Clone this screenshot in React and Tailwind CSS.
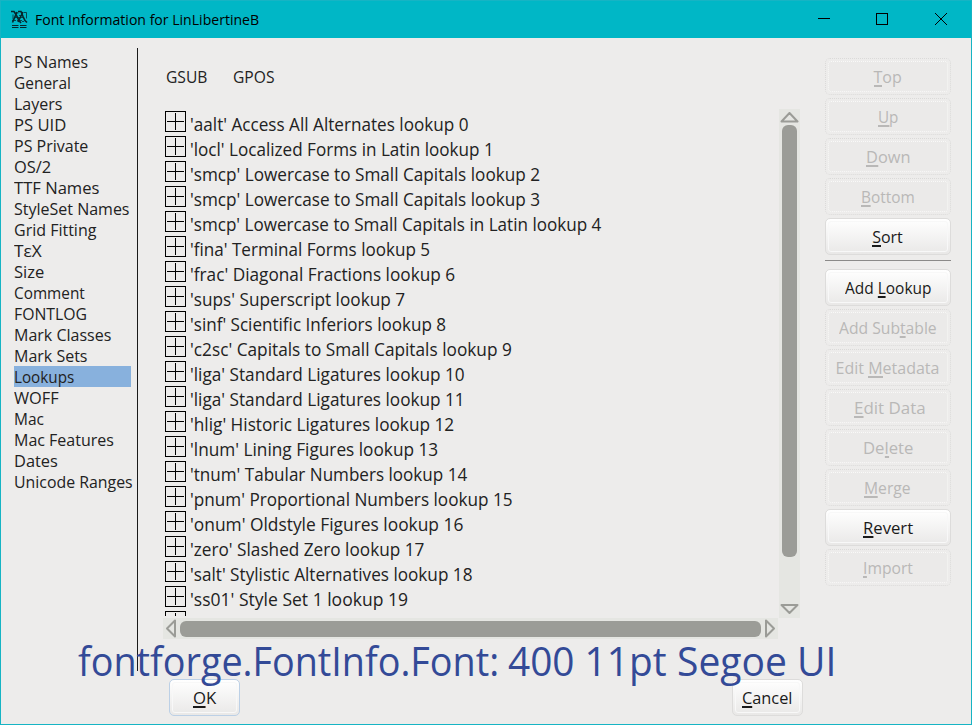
const SECTIONS = [
  ['PS Names', 74], ['General', 57], ['Layers', 48], ['PS UID', 52], ['PS Private', 74], ['OS/2', 37],
  ['TTF Names', 85], ['StyleSet Names', 116], ['Grid Fitting', 82], ['TεX', 28], ['Size', 30], ['Comment', 71],
  ['FONTLOG', 73], ['Mark Classes', 97], ['Mark Sets', 73], ['Lookups', 60], ['WOFF', 45], ['Mac', 30],
  ['Mac Features', 100], ['Dates', 44], ['Unicode Ranges', 119],
];

const LOOKUPS = [
  ["'aalt' Access All Alternates lookup 0", 279],
  ["'locl' Localized Forms in Latin lookup 1", 304],
  ["'smcp' Lowercase to Small Capitals lookup 2", 350],
  ["'smcp' Lowercase to Small Capitals lookup 3", 350],
  ["'smcp' Lowercase to Small Capitals in Latin lookup 4", 411],
  ["'fina' Terminal Forms lookup 5", 240],
  ["'frac' Diagonal Fractions lookup 6", 265],
  ["'sups' Superscript lookup 7", 215],
  ["'sinf' Scientific Inferiors lookup 8", 256],
  ["'c2sc' Capitals to Small Capitals lookup 9", 322],
  ["'liga' Standard Ligatures lookup 10", 275],
  ["'liga' Standard Ligatures lookup 11", 275],
  ["'hlig' Historic Ligatures lookup 12", 264],
  ["'lnum' Lining Figures lookup 13", 248],
  ["'tnum' Tabular Numbers lookup 14", 277],
  ["'pnum' Proportional Numbers lookup 15", 323],
  ["'onum' Oldstyle Figures lookup 16", 273],
  ["'zero' Slashed Zero lookup 17", 234],
  ["'salt' Stylistic Alternatives lookup 18", 282],
  ["'ss01' Style Set 1 lookup 19", 218],
];

/* Sets a run of text condensed so that it takes the given advance width. */
function Run({ width, children }) {
  const fit = (el) => {
    if (!el) return;
    el.style.transform = `scaleX(${width / el.offsetWidth})`;
  };
  return (
    <span className="inline-block whitespace-nowrap" style={{ width }}>
      <span ref={fit} className="inline-block origin-left">{children}</span>
    </span>
  );
}

/* The letter after "&" is the button's mnemonic. */
function Label({ text, disabled }) {
  const i = text.indexOf('&');
  return (
    <>
      {text.slice(0, i)}
      <span className={`inline-block h-[19px] border-b-2 leading-[19px] ${disabled ? 'border-[#b9b8b7]' : 'border-[#1a1a1a]'}`}>{text[i + 1]}</span>
      {text.slice(i + 2)}
    </>
  );
}

function Button({ text, width, disabled, ring, small }) {
  const size = small ? 'w-[71px]' : 'w-[126px]';
  const look = disabled
    ? 'border-dotted border-[#dbdad9] text-[#b9b8b7]'
    : `${ring ? 'border-[#bcd0e6]' : 'border-[#dddcdb]'} bg-linear-to-b from-white to-[#e9e8e7] text-[#1a1a1a]`;
  const inner = disabled ? 'border-dotted border-[#f9f9f8] bg-[#ebeae9]' : 'border-[#f8f8f8]';
  return (
    <button className={`flex h-[37px] shrink-0 rounded-[5px] border p-[2px] text-[16px] leading-[21px] ${size} ${look}`}>
      <span className={`flex h-full w-full items-center justify-center rounded-[3px] border pt-px pr-px ${inner}`}>
        <Run width={width}><Label text={text} disabled={disabled} /></Run>
      </span>
    </button>
  );
}

function Arrow({ points, w, h }) {
  return (
    <svg width={w} height={h} className="shrink-0" fill="none" stroke="#9b9c97" strokeWidth="2" strokeLinejoin="round">
      <polygon points={points} />
    </svg>
  );
}

function Expander() {
  return (
    <svg width="21" height="21" className="shrink-0" fill="none" stroke="#000" shapeRendering="crispEdges">
      <path d="M.5.5h20v20H.5zM10.5 2v17M2 10.5h17" />
    </svg>
  );
}

function AppIcon() {
  return (
    <svg width="17" height="19" viewBox="0 0 17 19" fill="none" stroke="#06262b">
      <path d="M0 1.5h3l2 3 3 6 2 2.500M7 1.500h3l2 5 2 4 2 2M6 2L3 9 1.500 12.500M12 2L9 8l-2 4" strokeWidth="1.6" />
      <path d="M2 4.500v5M1 10.500h4M5.500 3h2M8 5.500h2M13 2.500h2.500v6M11 11.500h2M4 7.500h9M6 10.500h5" strokeWidth="1" opacity=".75" />
      <path d="M1 15.500h6.500M9 15.500h6.500M1 17.500h6.500M9 17.500h6.500" strokeWidth="1" />
    </svg>
  );
}

export default function App() {
  return (
    <div className="relative flex h-[725px] w-[972px] flex-col overflow-hidden border border-[#16b4c4] bg-[#edeceb] font-['Open_Sans','Noto_Sans',sans-serif] text-[#222]">
      <header className="flex h-[37px] shrink-0 items-center bg-[#00b7c6] pl-[10px] text-black">
        <AppIcon />
        <h1 className="ml-[7px] flex-1 text-[14px] leading-[20px]"><Run width={224}>Font Information for LinLibertineB</Run></h1>
        <svg width="154" height="37" fill="none" stroke="#000">
          <path d="M1 17.5h12" />
          <rect x="59.5" y="12.5" width="11" height="11" />
          <path d="M118 12l12 12M130 12l-12 12" />
        </svg>
      </header>

      <div className="flex h-[687px] shrink-0">
        <nav className="mt-[13px] ml-[13px] w-[123px] text-[16px] leading-[23px]">
          {SECTIONS.map(([name, w]) => (
            <div key={name} className={`h-[21px] w-[117px] ${name === 'Lookups' ? 'bg-[#88b1dd]' : ''}`}>
              <Run width={w}>{name}</Run>
            </div>
          ))}
        </nav>
        <div className="mt-[10px] h-[623px] w-px shrink-0 bg-[#1a1a1a]" />

        <main className="ml-[24px] w-[663px] shrink-0">
          <div className="mt-[29px] flex h-[21px] gap-[26px] pl-[4px] text-[16px] leading-[21px]">
            <Run width={41}>GSUB</Run>
            <Run width={41}>GPOS</Run>
          </div>
          <div className="mt-[21px] flex">
            <div className="h-[509px] w-[617px] pt-[2px] pl-[3px]">
              <ul className="h-[505px] overflow-hidden text-[18px] leading-[25px]">
                {LOOKUPS.map(([name, w]) => (
                  <li key={name} className="flex h-[25px] items-start">
                    <Expander />
                    <span className="ml-[4px] mt-[1px] h-[24px]"><Run width={w}>{name}</Run></span>
                  </li>
                ))}
                <li><Expander /></li>
              </ul>
            </div>
            <div className="flex h-[509px] w-[21px] flex-col items-center bg-[#e5e6e2] pt-[3px]">
              <Arrow w={19} h={11} points="9.5,1 17.5,9.5 1.5,9.5" />
              <div className="mt-[2px] h-[432px] w-[15px] rounded-[6px] bg-[#9b9c97]" />
              <div className="flex-1" />
              <Arrow w={19} h={15} points="9.5,10 17.5,2 1.5,2" />
            </div>
          </div>
          <div className="ml-px flex h-[21px] w-[615px] items-center bg-[#e5e6e2] pl-[2px]">
            <Arrow w={12} h={19} points="2,9.5 10,1.5 10,17.5" />
            <div className="ml-[3px] h-[16px] w-[581px] rounded-[6px] bg-[#9b9c97]" />
            <Arrow w={15} h={19} points="13,9.5 5,1.5 5,17.5" />
          </div>
          <div className="mt-[40px] flex w-[641px] justify-between pl-[7px]">
            <Button small ring text="&OK" width={23} />
            <Button small text="&Cancel" width={50} />
          </div>
        </main>

        <aside className="mt-[20px] flex w-[126px] shrink-0 flex-col gap-[3px]">
          <Button disabled text="&Top" width={28} />
          <Button disabled text="&Up" width={20} />
          <Button disabled text="&Down" width={44} />
          <Button disabled text="&Bottom" width={54} />
          <Button text="&Sort" width={31} />
          <div className="mt-[2px] mb-[5px] h-px shrink-0 bg-[#8b8a89]" />
          <Button text="Add &Lookup" width={86} />
          <Button disabled text="Add Sub&table" width={98} />
          <Button disabled text="Edit &Metadata" width={104} />
          <Button disabled text="&Edit Data" width={72} />
          <Button disabled text="De&lete" width={50} />
          <Button disabled text="&Merge" width={47} />
          <Button text="&Revert" width={50} />
          <Button disabled text="&Import" width={50} />
        </aside>
      </div>

      <p className="absolute top-[633px] left-[77px] text-[40px] leading-[54px] whitespace-nowrap text-[#334a97]">
        <span className="flex">
          <Run width={421}>fontforge.FontInfo.Font:</Run>
          <span className="ml-[9px]"><Run width={158}>400 11pt</Run></span>
          <span className="ml-[11px]"><Run width={159}>Segoe UI</Run></span>
        </span>
      </p>
    </div>
  );
}
